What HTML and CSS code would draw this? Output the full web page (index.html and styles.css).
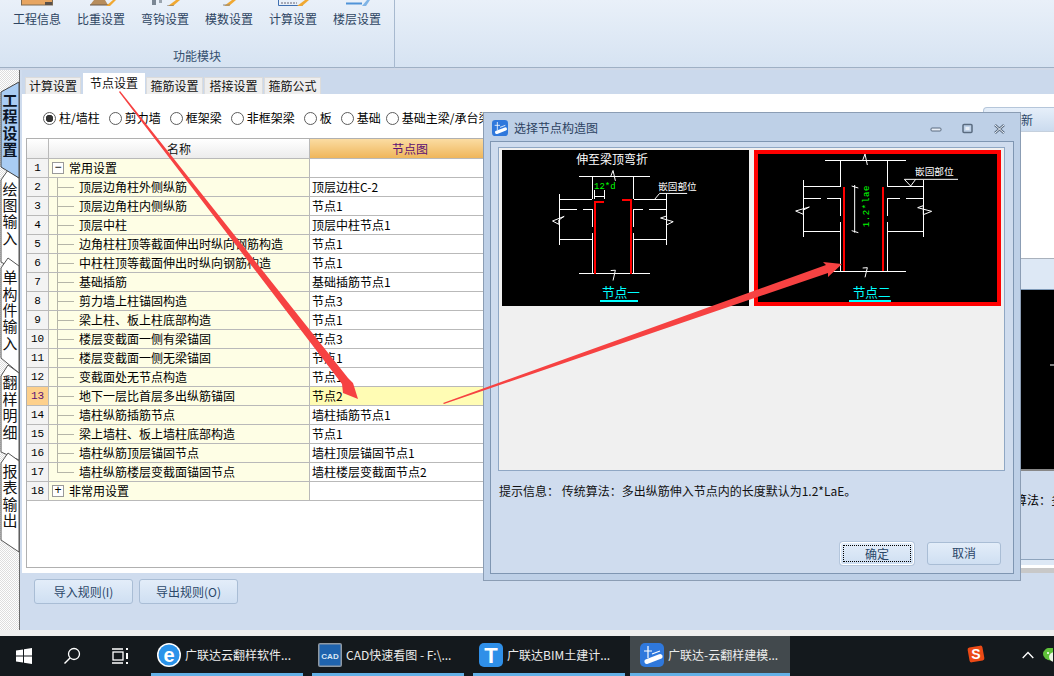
FILE: index.html
```html
<!DOCTYPE html>
<html lang="zh-CN">
<head>
<meta charset="utf-8">
<title>广联达-云翻样建模</title>
<link rel="stylesheet" href="styles.css">
</head>
<body>
<div class="app">
  <header class="ribbon">
    <section class="group">
      <div class="tools">
        <div class="tool"><svg class="ticon" viewBox="0 0 40 6"><rect x="4.5" y="-2" width="31" height="7" fill="#e7a561" stroke="#7d6a52"/><rect x="28" y="2" width="7" height="3" fill="#58504a"/></svg><span>工程信息</span></div>
        <div class="tool"><svg class="ticon" viewBox="0 0 40 6"><path d="M9 5h18l-3-5h-11z" fill="#b78d5c"/><path d="M9 5h20" stroke="#6a5a4a"/><path d="M25 6l7-6h3l-6 6z" fill="#f0a832"/></svg><span>比重设置</span></div>
        <div class="tool"><svg class="ticon" viewBox="0 0 40 6"><rect x="7" y="0" width="4" height="5" fill="#7b8794"/><rect x="14" y="0" width="3" height="3" fill="#9aa4ae"/><path d="M23 6l8-6h4l-7 6z" fill="#f0a832"/><path d="M22 6h7" stroke="#777"/></svg><span>弯钩设置</span></div>
        <div class="tool"><svg class="ticon" viewBox="0 0 40 6"><path d="M15 6l8-6h4l-7 6z" fill="#f0a832"/><path d="M14 5h7" stroke="#888"/></svg><span>模数设置</span></div>
        <div class="tool"><svg class="ticon" viewBox="0 0 40 6"><path d="M5.500 0v5.500h24" fill="none" stroke="#3f6fb0"/><path d="M8 3h16" stroke="#667" stroke-dasharray="2 1"/><path d="M24 6l8-6h4l-7 6z" fill="#f0a832"/></svg><span>计算设置</span></div>
        <div class="tool"><svg class="ticon" viewBox="0 0 40 6"><path d="M9 3.500h16" stroke="#4f93d8" stroke-width="2"/><path d="M25 6l5-6h3l-4 6z" fill="#7fb4e6"/></svg><span>楼层设置</span></div>
      </div>
      <div class="group-name">功能模块</div>
    </section>
  </header>

  <div class="main">
    <nav class="side">
      <svg class="side-shape" viewBox="0 70 20 566">
        <polygon class="tab-w" points="19,178 8,170 1,180 1,262 19,272"/>
        <polygon class="tab-w" points="19,266 8,258 1,268 1,358 19,373"/>
        <polygon class="tab-w" points="19,373 8,365 1,376 1,452 19,460"/>
        <polygon class="tab-w" points="19,461 8,453 1,463 1,540 19,552"/>
        <polygon class="tab-a" points="19,82 1,92 1,167 19,178"/>
      </svg>
      <div class="stab stab-on">工程设置</div>
      <div class="stab">绘图输入</div>
      <div class="stab">单构件输入</div>
      <div class="stab">翻样明细</div>
      <div class="stab">报表输出</div>
    </nav>

    <div class="content">
      <div class="tabbar">
        <div class="tab w56">计算设置</div>
        <div class="tab tab-on">节点设置</div>
        <div class="tab w57">箍筋设置</div>
        <div class="tab w59">搭接设置</div>
        <div class="tab w57">箍筋公式</div>
      </div>

      <div class="panel">
        <div class="panel-left">
          <div class="radios">
            <label class="radio"><i class="dot dot-on"></i>柱/墙柱</label>
            <label class="radio"><i class="dot"></i>剪力墙</label>
            <label class="radio"><i class="dot"></i>框架梁</label>
            <label class="radio"><i class="dot"></i>非框架梁</label>
            <label class="radio"><i class="dot"></i>板</label>
            <label class="radio tight"><i class="dot"></i>基础</label>
            <label class="radio"><i class="dot"></i>基础主梁/承台梁</label>
          </div>
          <div class="grid">
            <div class="row head"><div class="n"></div><div class="name">名称</div><div class="val">节点图</div></div>
            <div class="row"><div class="n">1</div><div class="name grp"><b class="box">−</b>常用设置</div><div class="val"></div></div>
            <div class="row"><div class="n">2</div><div class="name leaf">顶层边角柱外侧纵筋</div><div class="val">顶层边柱C-2</div></div>
            <div class="row"><div class="n">3</div><div class="name leaf">顶层边角柱内侧纵筋</div><div class="val">节点1</div></div>
            <div class="row"><div class="n">4</div><div class="name leaf">顶层中柱</div><div class="val">顶层中柱节点1</div></div>
            <div class="row"><div class="n">5</div><div class="name leaf">边角柱柱顶等截面伸出时纵向钢筋构造</div><div class="val">节点1</div></div>
            <div class="row"><div class="n">6</div><div class="name leaf">中柱柱顶等截面伸出时纵向钢筋构造</div><div class="val">节点1</div></div>
            <div class="row"><div class="n">7</div><div class="name leaf">基础插筋</div><div class="val">基础插筋节点1</div></div>
            <div class="row"><div class="n">8</div><div class="name leaf">剪力墙上柱锚固构造</div><div class="val">节点3</div></div>
            <div class="row"><div class="n">9</div><div class="name leaf">梁上柱、板上柱底部构造</div><div class="val">节点1</div></div>
            <div class="row"><div class="n">10</div><div class="name leaf">楼层变截面一侧有梁锚固</div><div class="val">节点3</div></div>
            <div class="row"><div class="n">11</div><div class="name leaf">楼层变截面一侧无梁锚固</div><div class="val">节点1</div></div>
            <div class="row"><div class="n">12</div><div class="name leaf">变截面处无节点构造</div><div class="val">节点1</div></div>
            <div class="row row-on"><div class="n">13</div><div class="name leaf">地下一层比首层多出纵筋锚固</div><div class="val">节点2</div></div>
            <div class="row"><div class="n">14</div><div class="name leaf">墙柱纵筋插筋节点</div><div class="val">墙柱插筋节点1</div></div>
            <div class="row"><div class="n">15</div><div class="name leaf">梁上墙柱、板上墙柱底部构造</div><div class="val">节点1</div></div>
            <div class="row"><div class="n">16</div><div class="name leaf">墙柱纵筋顶层锚固节点</div><div class="val">墙柱顶层锚固节点1</div></div>
            <div class="row"><div class="n">17</div><div class="name leaf last">墙柱纵筋楼层变截面锚固节点</div><div class="val">墙柱楼层变截面节点2</div></div>
            <div class="row"><div class="n">18</div><div class="name grp"><b class="box">+</b>非常用设置</div><div class="val"></div></div>
          </div>
        </div>

        <aside class="pane">
          <button class="refresh">刷新</button>
          <div class="pane-white"></div>
          <div class="pane-band"></div>
          <div class="pane-black"><svg class="tick" viewBox="0 0 71 179"><path d="M67 75h4" stroke="#fff"/></svg></div>
          <div class="pane-info">传统算法：多出纵筋</div>
          <div class="pane-strip"></div>
        </aside>
      </div>

      <div class="footer">
        <button class="btn">导入规则(I)</button>
        <button class="btn">导出规则(O)</button>
      </div>
    </div>
  </div>

  <div class="gap"></div>

  <footer class="taskbar">
    <div class="cell"><svg width="16" height="16" viewBox="0 0 16 16"><path fill="#fff" d="M0 2.500l7-1v6H0zM8 1.300L16 0v7.500H8zM0 8.500h7v6l-7-1zM8 8.500h8V16l-8-1.300z"/></svg></div>
    <div class="cell"><svg width="18" height="18" viewBox="0 0 18 18"><circle cx="11" cy="7" r="5.500" fill="none" stroke="#fff" stroke-width="1.300"/><path d="M7 11l-5.500 5.500" stroke="#fff" stroke-width="1.500"/></svg></div>
    <div class="cell"><svg width="17" height="16" viewBox="0 0 17 16" fill="none" stroke="#fff" stroke-width="1.300"><path d="M0 1h11M0 15h11"/><rect x="1" y="4" width="10" height="8"/><path d="M15 0v2M15 5v6M15 14v2" stroke-width="2"/></svg></div>
    <div class="task task-first">
      <svg class="ticn" viewBox="0 0 24 24"><circle cx="12" cy="12" r="12" fill="#fff"/><circle cx="12" cy="12" r="10.500" fill="#2a93ea"/><text x="12" y="19" class="ie">e</text></svg>
      <span>广联达云翻样软件...</span>
    </div>
    <div class="task">
      <svg class="ticn" viewBox="0 0 24 24"><rect width="24" height="24" rx="2" fill="#8f99a3"/><rect x="1.500" y="1.500" width="21" height="21" fill="#1f63ad"/><text x="12" y="16" class="cad">CAD</text></svg>
      <span>CAD快速看图 - F:\...</span>
    </div>
    <div class="task">
      <svg class="ticn" viewBox="0 0 24 24"><rect width="24" height="24" rx="5" fill="#2f8fe8"/><text x="12" y="20" class="tee">T</text></svg>
      <span>广联达BIM土建计...</span>
    </div>
    <div class="task task-on">
      <svg class="ticn" viewBox="0 0 24 24"><rect width="24" height="24" rx="5" fill="#2f78dc"/><path d="M7 18.500L20 13.500" stroke="#fff" stroke-width="5" stroke-linecap="round"/><path d="M8 3v12M4 8h8M12 11l8-3" stroke="#fff" stroke-width="1.200" fill="none"/></svg>
      <span>广联达-云翻样建模...</span>
    </div>
    <div class="tray">
      <svg class="sogou" viewBox="0 0 18 18"><rect x="1.500" y="1.500" width="15" height="15" rx="2" fill="#ec4a16" transform="rotate(-10 9 9)"/><text x="9" y="14" class="sg">S</text></svg>
      <svg class="caret" viewBox="0 0 12 8"><path d="M.7 7L6 1.500 11.300 7" fill="none" stroke="#fff" stroke-width="1.300"/></svg>
      <svg class="wechat" viewBox="0 0 10 14"><ellipse cx="8" cy="6" rx="8" ry="6.500" fill="#5fc13a"/><ellipse cx="12" cy="9" rx="6" ry="5" fill="#e9f5e3"/><circle cx="5" cy="5" r="1" fill="#fff"/></svg>
    </div>
  </footer>

  <div class="dialog">
    <div class="dlg-title">
      <svg class="dlg-icon" viewBox="0 0 24 24"><rect width="24" height="24" rx="5" fill="#2f78dc"/><path d="M7 18.500L20 13.500" stroke="#fff" stroke-width="5" stroke-linecap="round"/><path d="M8 3v12M4 8h8M12 11l8-3" stroke="#fff" stroke-width="1.200" fill="none"/></svg>
      <span class="dlg-name">选择节点构造图</span>
      <svg class="winbtns" viewBox="0 0 76 12">
        <rect x="1" y="5" width="10" height="3" rx="1" fill="#e8eef6" stroke="#5a6b80"/>
        <rect x="33" y="1.500" width="9" height="8" rx="1" fill="none" stroke="#5a6b80" stroke-width="1.500"/>
        <rect x="35.500" y="4" width="4" height="3" fill="#e8eef6"/>
        <path d="M65 2l9 8M74 2l-9 8" stroke="#5a6b80" stroke-width="2.500"/>
        <path d="M65 2l9 8M74 2l-9 8" stroke="#eef3f9" stroke-width="1"/>
      </svg>
    </div>
    <div class="dlg-body">
      <div class="pics">
        <svg class="pic" viewBox="51 120 743 468">
          <rect x="51" y="120" width="743" height="468" fill="#000"/>
          <path class="wl" d="M282 199H497M322 199V268H223M448 199V268H545M223 252V405M545 252V405M223 298H276M294 298H322V350M448 350V298H474M492 298H545M223 388H322M322 370V492M448 388H545M448 370V492M282 492H495"/>
          <path class="wt" d="M378 199L385 181 392 212M378 482L392 481 385 512M203 333L238 319 222 330 222 343zM566 335L528 324 546 318 546 345z"/>
          <path class="wt" d="M510 268L525 250H608"/>
          <path class="gl" d="M330 240V268M358 240V268M330 258H358"/>
          <path class="rl" d="M357 275H332V492M411 271H439V492"/>
          <text x="382" y="160" class="t36">伸至梁顶弯折</text>
          <text x="328" y="237" class="t-green">12*d</text>
          <text x="521" y="240" class="t-lab">嵌固部位</text>
          <text x="409" y="561" class="t-cyan">节点一</text>
          <rect x="345" y="570" width="114" height="8" fill="#0ff"/>
        </svg>
        <svg class="pic" viewBox="12 150 741 468">
          <rect x="12" y="150" width="741" height="468" fill="#000"/>
          <path class="wl" d="M225 181H468M225 514H468M272 181V260H160M412 181V260H520M160 240V410M520 240V412M160 295H213M232 295H272V347M412 347V295H450M468 295H520M160 394H272M272 366V514M412 394H520M412 366V514"/>
          <path class="wt" d="M338 181L345 162 352 195M338 504L352 503 345 532M137 333L178 321 160 330 160 343zM545 334L503 323 520 317 520 344zM463 238H624M463 238L482 258 497 238"/>
          <path class="wt" d="M314 255V398M305 258L325 264M305 392L325 398"/>
          <path class="rr" d="M282 261V513M399 261V513"/>
          <text class="t-green2" transform="translate(358 382) rotate(-90)">1.2*lae</text>
          <text x="495" y="225" class="t-lab">嵌固部位</text>
          <text x="365" y="590" class="t-cyan">节点二</text>
          <rect x="297" y="600" width="126" height="8" fill="#0ff"/>
          <rect x="18" y="156" width="729" height="456" fill="none" stroke="#f00" stroke-width="12"/>
        </svg>
      </div>
      <p class="hint">提示信息： 传统算法：多出纵筋伸入节点内的长度默认为1.2*LaE。</p>
      <div class="dlg-actions">
        <button class="dbtn dbtn-focus"><span>确定</span></button>
        <button class="dbtn"><span>取消</span></button>
      </div>
    </div>
  </div>

  <svg class="arrows" viewBox="0 0 1054 676">
    <polygon points="119,92 120,91 348,378 353,383 358,399 343,393 342,384"/>
    <polygon points="443,403 826,265 823,262 842,264 828,277 828,273 444,404"/>
  </svg>
</div>
</body>
</html>
```
FILE: styles.css
```css
* { box-sizing: border-box; }
html, body { margin: 0; padding: 0; }
body {
  width: 1054px;
  height: 676px;
  overflow: hidden;
  font: 12px/14px "Noto Sans CJK SC", "Liberation Sans", sans-serif;
  color: #000;
  background: #eee;
}
.app { position: relative; width: 1054px; height: 676px; display: flex; flex-direction: column; overflow: hidden; }

/* ribbon */
.ribbon {
  height: 70px;
  flex: none;
  background: linear-gradient(#e9f0f9, #d6e3f2);
  border-bottom: 2px solid #d0d9e8;
  box-shadow: inset 0 -1px 0 #9fb0c4;
}
.group { width: 395px; height: 68px; border-right: 1px solid #a7b9cf; display: flex; flex-direction: column; }
.tools { display: flex; padding-left: 5px; }
.tool { width: 64px; display: flex; flex-direction: column; align-items: center; color: #2e4562; }
.ticon { width: 40px; height: 6px; display: block; margin-bottom: 6px; }
.group-name { margin-top: 23px; text-align: center; color: #35506f; }

/* main */
.main { flex: none; height: 560px; display: flex; }
.side {
  position: relative;
  width: 20px;
  flex: none;
  padding-top: 22px;
  display: flex;
  flex-direction: column;
  gap: 23px;
  border-right: 1px solid #6b6b6b;
  background: repeating-conic-gradient(#fff 0 25%, #dedede 0 50%) 0 0 / 2px 2px;
}
.side-shape { position: absolute; left: 0; top: 0; width: 20px; height: 566px; }
.tab-w { fill: #fff; stroke: #555; }
.tab-a { fill: #a9ccf3; stroke: #444; }
.stab { position: relative; width: 19px; text-align: center; font-size: 15px; line-height: 16.400px; color: #111; padding-left: 1px; }
.stab-on { font-weight: 700; color: #0c1626; }

.content { flex: 1; min-width: 0; display: flex; flex-direction: column; background: #cfdcee; }
.tabbar { height: 24px; flex: none; display: flex; align-items: flex-end; padding-left: 3px; gap: 1px; background: #cbd9ec; margin-left: 2px; }
.tab { height: 17px; background: #eeeeee; border: 1px solid #dcdcdc; border-bottom: 0; line-height: 16px; text-align: center; color: #111; }
.tab:first-child { margin-right: 1px; }
.w56 { width: 56px; }
.w57 { width: 57px; }
.w59 { width: 59px; }
.tab-on { width: 62px; height: 21px; background: #fff; border-color: #fff; line-height: 18px; padding-bottom: 2px; }

.panel { flex: none; height: 479px; margin-left: 2px; background: #fff; display: flex; overflow: hidden; }
.panel-left { width: 958px; flex: none; padding-left: 4px; display: flex; flex-direction: column; }
.radios { height: 44px; flex: none; padding: 4px 0 0 17px; display: flex; align-items: center; gap: 9px; }
.radio { display: flex; align-items: center; white-space: nowrap; }
.tight { margin-right: -4px; }
.dot { width: 13px; height: 13px; border: 1px solid #5d5d5d; border-radius: 50%; margin-right: 3px; background: #fff; flex: none; }
.dot-on { background: radial-gradient(circle, #333 0 3.500px, #fff 4px); }

.grid { height: 430px; flex: none; border: 1px solid #b0b0b0; background: #fff; margin-bottom: 5px; }
.row { height: 19px; display: flex; line-height: 18px; border-bottom: 1px solid #b9b9b9; width: 483px; }
.head { height: 20px; line-height: 19px; text-align: center; }
.n { width: 22px; flex: none; text-align: center; border-right: 1px solid #b9b9b9; background: #f3f3f3; font: 11px/18px "Liberation Mono", monospace; }
.name { width: 261px; flex: none; border-right: 1px solid #b9b9b9; background: #fefee5; white-space: nowrap; overflow: hidden; }
.val { width: 200px; flex: none; padding-left: 2px; white-space: nowrap; }
.head .n { background: linear-gradient(#fff, #ececec); }
.head .name { background: linear-gradient(#fff, #ececec); color: #111; }
.head .val { background: linear-gradient(#fbdca2, #efb65b); color: #5b0f73; padding-left: 0; text-align: center; }
.grp { display: flex; align-items: center; padding-left: 3px; }
.box { width: 12px; height: 12px; border: 1px solid #9a9a9a; background: #fff; font: 400 12px/9px "Liberation Sans", sans-serif; text-align: center; margin-right: 5px; flex: none; }
.leaf {
  padding-left: 30px;
  background:
    linear-gradient(#b5b5a8, #b5b5a8) 8px 0 / 1px 100% no-repeat,
    linear-gradient(#b5b5a8, #b5b5a8) 8px 9px / 17px 1px no-repeat,
    #fefee5;
}
.last {
  background:
    linear-gradient(#b5b5a8, #b5b5a8) 8px 0 / 1px 10px no-repeat,
    linear-gradient(#b5b5a8, #b5b5a8) 8px 9px / 17px 1px no-repeat,
    #fefee5;
}
.row-on .n { background: #fdd08c; color: #5b0f73; }
.row-on .val { background: #fffcb4; }

/* pane behind the dialog */
.pane { width: 71px; flex: none; margin: 13px 0 0 3px; display: flex; flex-direction: column; }
.refresh {
  width: 76px; height: 24px; flex: none; padding: 0; font: inherit; color: #2c4667; text-align: center;
  border: 1px solid #b5c6da; border-bottom: 0; border-radius: 4px 4px 0 0;
  background: linear-gradient(#e6effa, #cbdbee);
}
.pane-white { height: 128px; flex: none; background: #fff; border-top: 1px solid #c5d0dd; border-bottom: 1px solid #a9b1bc; }
.pane-band { height: 31px; flex: none; background: #dde8f5; border-bottom: 1px solid #7f9ab8; }
.pane-black { height: 181px; flex: none; background: #000; border-bottom: 2px solid #888; }
.tick { display: block; width: 71px; height: 179px; }
.pane-info { height: 88px; flex: none; background: #cfdcee; padding: 22px 0 0 8px; white-space: nowrap; overflow: hidden; }
.pane-strip { flex: 1; background: linear-gradient(#dde8f5 0 5px, #fff 5px 8px, #c8c8c8 8px); border-top: 1px solid #8ea4bd; }

.footer { flex: 1; display: flex; gap: 6px; align-items: flex-start; margin-left: 2px; padding: 6px 0 0 12px; }
.btn {
  width: 99px; height: 25px; padding: 0; font: inherit; color: #2b4769;
  border: 1px solid #a9bdd5; border-radius: 3px;
  background: linear-gradient(#e3edf9, #cfdff2);
}
.gap { height: 6px; flex: none; background: #eeeeee; }

/* taskbar */
.taskbar { flex: 1; display: flex; background: #14191d; color: #ececec; }
.cell { width: 48px; flex: none; display: flex; align-items: center; justify-content: center; }
.task {
  width: 152px; flex: none; margin-right: 9px; padding-left: 6px; display: flex; align-items: center; gap: 4px;
  border-bottom: 3px solid #63b0e6; white-space: nowrap; overflow: hidden;
}
.task-first { margin-left: 7px; }
.task:nth-child(6) { margin-right: 5px; }
.task-on { width: 160px; margin-right: 0; background: #42494d; padding-left: 10px; }
.ticn { width: 24px; height: 24px; flex: none; }
.ie { font: 700 20px "Liberation Sans", sans-serif; fill: #fff; text-anchor: middle; }
.cad { font: 700 8px "Liberation Sans", sans-serif; fill: #dbe8f5; text-anchor: middle; }
.tee { font: 700 22px "Liberation Sans", sans-serif; fill: #fff; text-anchor: middle; }
.sg { font: 700 14px "Liberation Sans", sans-serif; fill: #fff; text-anchor: middle; }
.tray { flex: 1; display: flex; align-items: center; padding-left: 177px; }
.sogou { width: 18px; height: 18px; margin: -4px 0 0 0; }
.caret { width: 12px; height: 8px; margin: -2px 0 0 37px; }
.wechat { width: 10px; height: 14px; margin: -2px 0 0 9px; }

/* dialog */
.dialog {
  position: absolute; left: 483px; top: 112px; width: 538px; height: 469px;
  display: flex; flex-direction: column; padding: 0 6px 6px;
  background: #bed0e7; border: 1px solid #8b9db4; z-index: 3;
}
.dlg-title { height: 28px; flex: none; display: flex; align-items: center; color: #2d4261; padding: 2px 0 0 3px; margin: 0 -1px; }
.dlg-icon { width: 16px; height: 16px; flex: none; }
.dlg-name { margin-left: 6px; flex: 1; }
.winbtns { width: 76px; height: 12px; margin: 2px 9px 0 0; flex: none; }
.dlg-body { flex: 1; display: flex; flex-direction: column; background: #cfdcee; border: 1px solid #7f96b2; padding: 5px 8px 8px 7px; }
.pics { height: 324px; flex: none; display: flex; gap: 5px; padding: 2px 3px; background: #f0f0f0; border: 1px solid #8fa7c4; }
.pic { width: 247px; height: 156px; flex: none; display: block; shape-rendering: crispEdges; }
.wl { fill: none; stroke: #fff; stroke-width: 3; }
.wt { fill: none; stroke: #fff; stroke-width: 3; shape-rendering: auto; }
.gl { fill: none; stroke: #fff; stroke-width: 3; }
.rl { fill: none; stroke: #f00; stroke-width: 6; }
.rr { fill: none; stroke: #f00; stroke-width: 7; }
.t36 { font-size: 36px; fill: #fff; text-anchor: middle; }
.t-green { font: 27px "Liberation Mono", monospace; fill: #0f0; }
.t-green2 { font: 27px "Liberation Mono", monospace; fill: #0f0; letter-spacing: 2px; }
.t-lab { font-size: 29px; fill: #fff; }
.t-cyan { font-size: 38px; fill: #0ff; text-anchor: middle; }
.hint { margin: 13px 0 0 1px; white-space: nowrap; color: #111; }
.dlg-actions { margin-top: auto; display: flex; justify-content: flex-end; gap: 13px; padding-right: 4px; }
.dbtn {
  width: 74px; height: 23px; padding: 2px; font: inherit; color: #2b4769;
  border: 1px solid #a9bdd5; border-radius: 3px;
  background: linear-gradient(#e3edf9, #cfdff2);
}
.dbtn span { display: block; height: 100%; line-height: 15px; }
.dbtn-focus { border-color: #fff; box-shadow: 0 0 0 1px #b4c6dc; }
.dbtn-focus span { border: 1px dotted #000; }

/* annotations */
.arrows { position: absolute; left: 0; top: 0; width: 1054px; height: 676px; z-index: 5; pointer-events: none; }
.arrows polygon { fill: #f64242; }
```
